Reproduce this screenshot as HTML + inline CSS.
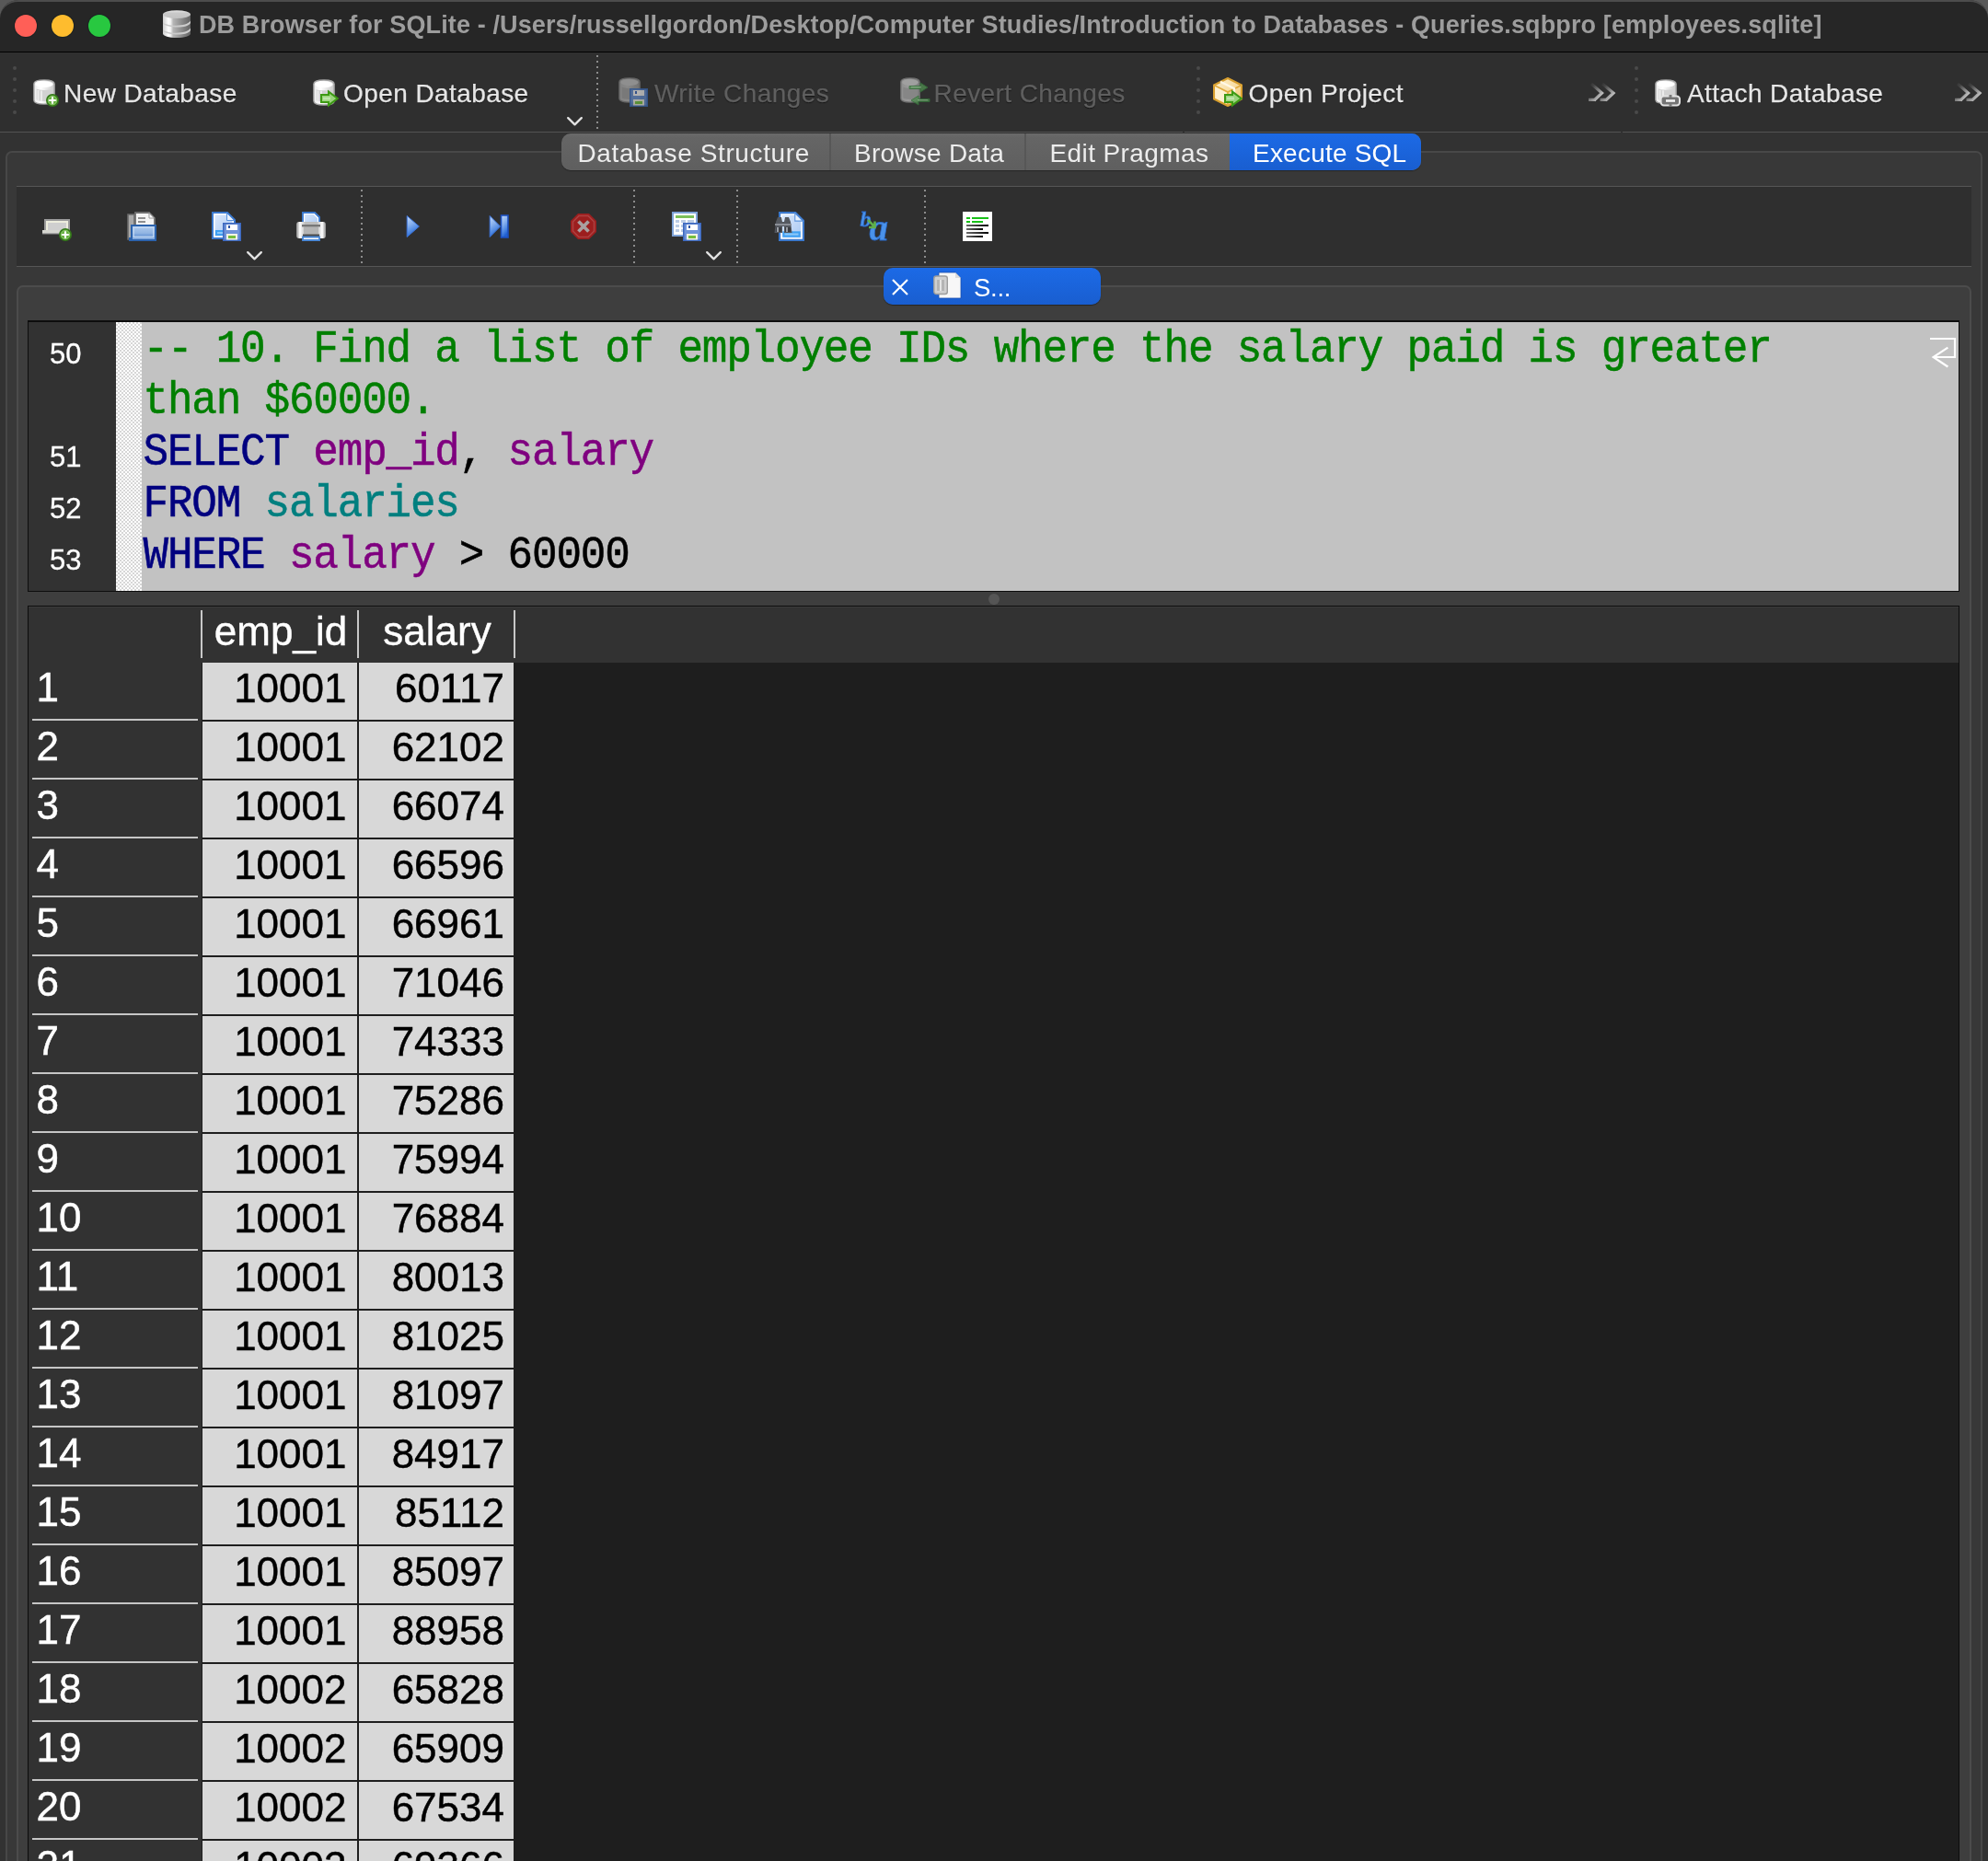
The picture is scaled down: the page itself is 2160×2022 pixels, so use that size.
<!DOCTYPE html>
<html>
<head>
<meta charset="utf-8">
<title>DB Browser for SQLite</title>
<style>
*{box-sizing:border-box;margin:0;padding:0}
html,body{width:2160px;height:2022px;overflow:hidden;background:#585858}
body{position:relative;font-family:"Liberation Sans",sans-serif;color:#e4e4e4}
#root{position:absolute;left:0;top:0;width:2160px;height:2022px;overflow:hidden;will-change:transform}
.abs{position:absolute}
svg{position:absolute;overflow:visible}
/* window + title bar */
#win{left:0;top:0;width:2160px;height:2100px;background:#323232;border-radius:20px 20px 0 0;overflow:hidden}
#titlebar{left:0;top:0;width:2160px;height:56px;background:#262626;border-top:2px solid #4c4c4c;border-radius:20px 20px 0 0}
#titleline{left:0;top:56px;width:2160px;height:1px;background:#000}
.tl{position:absolute;top:16px;width:24px;height:24px;border-radius:50%}
#title{left:216px;top:11px;font-weight:bold;font-size:27px;line-height:32px;letter-spacing:0.12px;color:#9d9d9d;white-space:nowrap}
/* main toolbar */
#toolbar{left:0;top:57px;width:2160px;height:86px;background:#2f2f2f}
.toolline{position:absolute;top:143px;height:1px;background:#525252}
.tbtxt{position:absolute;top:86px;font-size:28px;line-height:32px;letter-spacing:0.42px;color:#e6e6e6;white-space:nowrap;text-shadow:0 1px 1px rgba(0,0,0,.6);-webkit-text-stroke:0.25px currentColor}
.tbtxt.dis{color:#5f5f5f}
.vdots{position:absolute;width:2px;background-image:linear-gradient(#8c8c8c 2px,transparent 2px);background-size:2px 6px}
.hdot{position:absolute;width:4px;height:4px;border-radius:2px;background:#4a4a4a}
/* tabs */
#tabs{left:610px;top:145px;height:40px;width:934px;border-radius:10px;background:linear-gradient(#6a6a6a,#656565 12%,#5f5f5f);overflow:hidden;box-shadow:0 1px 1px rgba(0,0,0,.35)}
.tab{position:absolute;top:0;height:40px;font-size:28px;line-height:43px;letter-spacing:0.45px;color:#ececec;white-space:nowrap}
.tdiv{position:absolute;top:0;width:2px;height:40px;background:#575757}
/* panels */
#panel1{left:6px;top:164px;width:2148px;height:1900px;background:#383838;border:2px solid #484848;border-radius:7px}
#sqlbar{left:18px;top:202px;width:2124px;height:88px;background:#2f2f2f;border-top:1px solid #565656;border-bottom:1px solid #565656}
#panel2{left:18px;top:310px;width:2124px;height:1800px;background:#3e3e3e;border:2px solid #4c4c4c;border-radius:7px}
#sqltab{left:960px;top:291px;width:236px;height:40px;background:linear-gradient(#1c6ae6,#195ed0);border-radius:10px;box-shadow:0 1px 1px rgba(0,0,0,.4)}
#sqltabtxt{left:1058px;top:297px;font-size:27.5px;line-height:32px;color:#fff;letter-spacing:-0.3px}
/* editor */
#editor{left:30px;top:348px;width:2099px;height:295px;background:#c2c2c2;border:2px solid #0d0d0d;border-right-width:1px;border-bottom-width:1px;border-left-width:1px}
#gutter{left:31px;top:350px;width:95px;height:292px;background:#323232}
#fold{left:126px;top:350px;width:28px;height:292px;background-color:#fff;background-image:conic-gradient(#d6d6d6 25%,#fff 0 50%,#d6d6d6 0 75%,#fff 0);background-size:4px 4px}
.ln{position:absolute;left:31px;width:57.5px;text-align:right;font-size:31px;line-height:34px;color:#fff;-webkit-text-stroke:0.3px #fff}
.code{position:absolute;left:155.5px;font-family:"Liberation Mono",monospace;font-size:46px;line-height:56px;letter-spacing:-1.2px;white-space:pre;transform:scaleY(1.08);transform-origin:0 42px;-webkit-text-stroke:0.5px currentColor}
.cm{color:#007f00}.kw{color:#00007f}.id{color:#7f007f}.tb{color:#007f7f}.bk{color:#000}
/* splitter */
#splitdot{left:1074px;top:645px;width:12px;height:12px;border-radius:6px;background:#555}
/* results */
#results{left:30px;top:658px;width:2099px;height:1400px;background:#1e1e1e;border:1px solid #0c0c0c}
#rhead{left:31px;top:659px;width:2097px;height:61px;background:#323232;border-top:1px solid #3c3c3c}
#rowhdr{left:31px;top:720px;width:188px;height:1320px;background:#323232}
.hsep{position:absolute;top:663px;width:2px;height:52px;background:#c8c8c8}
.hd{position:absolute;top:660px;height:58px;font-size:44px;line-height:52px;color:#fff;text-align:center;white-space:nowrap;-webkit-text-stroke:0.4px #fff}
.rn{position:absolute;left:39.5px;font-size:44px;line-height:52px;color:#fff;-webkit-text-stroke:0.45px #fff}
.rl{position:absolute;left:35px;width:180px;height:2px;background:#c6c6c6}
.c1,.c2{position:absolute;height:62px;background:#d8d8d8;color:#000;font-size:44px;line-height:55px;text-align:right;white-space:nowrap;-webkit-text-stroke:0.45px #000}
.c1{left:220px;width:168px;padding-right:11.5px}
.c2{left:390px;width:168px;padding-right:10px}
</style>
</head>
<body>
<div id="root">
<svg width="0" height="0" style="left:0;top:0">
<defs>
  <linearGradient id="gCyl" x1="0" y1="0" x2="1" y2="0"><stop offset="0" stop-color="#ededed"/><stop offset=".35" stop-color="#ffffff"/><stop offset="1" stop-color="#c9c9c9"/></linearGradient>
  <linearGradient id="gCylD" x1="0" y1="0" x2="1" y2="0"><stop offset="0" stop-color="#8f8f8f"/><stop offset=".4" stop-color="#9a9a9a"/><stop offset="1" stop-color="#7c7c7c"/></linearGradient>
  <linearGradient id="gPage" x1="0" y1="0" x2="1" y2="1"><stop offset="0" stop-color="#dbe8fb"/><stop offset="1" stop-color="#a9c8f2"/></linearGradient>
  <linearGradient id="gFolder" x1="0" y1="0" x2="0" y2="1"><stop offset="0" stop-color="#b2cdee"/><stop offset=".55" stop-color="#8fb3e2"/><stop offset=".56" stop-color="#7ba4db"/><stop offset="1" stop-color="#86acdf"/></linearGradient>
  <linearGradient id="gPlay" x1="0" y1="0" x2=".35" y2="1"><stop offset="0" stop-color="#c4dafa"/><stop offset=".45" stop-color="#86b0ee"/><stop offset=".8" stop-color="#4682e0"/><stop offset="1" stop-color="#1f5fd0"/></linearGradient>
  <linearGradient id="gPrn" x1="0" y1="0" x2="1" y2="0"><stop offset="0" stop-color="#8a8a8a"/><stop offset=".12" stop-color="#ffffff"/><stop offset=".3" stop-color="#bdbdbd"/><stop offset=".7" stop-color="#bdbdbd"/><stop offset=".88" stop-color="#ffffff"/><stop offset="1" stop-color="#8a8a8a"/></linearGradient>
  <linearGradient id="gBox" x1="0" y1="0" x2="1" y2="1"><stop offset="0" stop-color="#fff3d6"/><stop offset="1" stop-color="#f0c870"/></linearGradient>
  <linearGradient id="gExt" x1="0" y1="0" x2="1" y2="1"><stop offset="0" stop-color="#d8d8d8" stop-opacity="0"/><stop offset=".25" stop-color="#d8d8d8" stop-opacity=".12"/><stop offset=".6" stop-color="#d8d8d8" stop-opacity=".55"/><stop offset="1" stop-color="#ececec" stop-opacity="1"/></linearGradient>
  <linearGradient id="gLine" x1="0" y1="0" x2="1" y2="0"><stop offset="0" stop-color="#6a6a6a"/><stop offset="1" stop-color="#000"/></linearGradient>
  <!-- toolbar extension >> 28x20 -->
</defs>
</svg>

<div id="win" class="abs"></div>
<!-- TITLE BAR -->
<div id="titlebar" class="abs"></div>
<div id="titleline" class="abs"></div>
<div class="tl" style="left:16px;background:#ff5f57;box-shadow:0 0 0 1px #1c2222"></div>
<div class="tl" style="left:56px;background:#febc2e;box-shadow:0 0 0 1px #1c2222"></div>
<div class="tl" style="left:96px;background:#28c840;box-shadow:0 0 0 1px #1c2222"></div>
<!-- app icon: stacked db -->
<svg style="left:177px;top:11px" width="30" height="30" viewBox="0 0 30 30">
  <defs><linearGradient id="gApp" x1="0" y1="0" x2="1" y2="0"><stop offset="0" stop-color="#d0d0d0"/><stop offset=".1" stop-color="#e6e6e6"/><stop offset=".2" stop-color="#ffffff"/><stop offset=".28" stop-color="#f2f2f2"/><stop offset=".37" stop-color="#b6b6b6"/><stop offset=".6" stop-color="#969696"/><stop offset="1" stop-color="#626262"/></linearGradient>
  <linearGradient id="gAppT" x1="0" y1="0" x2="0" y2="1"><stop offset="0" stop-color="#e8e8e8"/><stop offset=".35" stop-color="#c9c9c9"/><stop offset="1" stop-color="#c2c2c2"/></linearGradient></defs>
  <path d="M0,4.6 V25.4 C0,28 6.5,30 15,30 S30,28 30,25.4 V4.6Z" fill="url(#gApp)"/>
  <path d="M0,13.2 C4,17.8 26,18.6 30,11.6 V14 C27,20.6 4,19.2 0,14.4Z" fill="#cbcbcb"/>
  <path d="M0,21.2 C4,25.8 26,26.6 30,19.6 V22 C27,28.6 4,27.2 0,22.4Z" fill="#cbcbcb"/>
  <ellipse cx="15" cy="4.6" rx="15" ry="4.4" fill="url(#gAppT)"/>
</svg>
<div id="title" class="abs">DB Browser for SQLite - /Users/russellgordon/Desktop/Computer Studies/Introduction to Databases - Queries.sqbpro [employees.sqlite]</div>

<!-- MAIN TOOLBAR -->
<div id="toolbar" class="abs"></div>
<div class="toolline" style="left:0;width:1285px"></div>
<div class="toolline" style="left:1287px;width:474px"></div>
<div class="toolline" style="left:1763px;width:397px"></div>
<!-- handles -->
<div class="hdot" style="left:14px;top:72px"></div><div class="hdot" style="left:14px;top:84px"></div><div class="hdot" style="left:14px;top:96px"></div><div class="hdot" style="left:14px;top:108px"></div><div class="hdot" style="left:14px;top:120px"></div>
<div class="hdot" style="left:1300px;top:72px"></div><div class="hdot" style="left:1300px;top:84px"></div><div class="hdot" style="left:1300px;top:96px"></div><div class="hdot" style="left:1300px;top:108px"></div><div class="hdot" style="left:1300px;top:120px"></div>
<div class="hdot" style="left:1776px;top:72px"></div><div class="hdot" style="left:1776px;top:84px"></div><div class="hdot" style="left:1776px;top:96px"></div><div class="hdot" style="left:1776px;top:108px"></div><div class="hdot" style="left:1776px;top:120px"></div>
<div class="vdots" style="left:648px;top:60px;height:80px"></div>

<!-- New Database -->
<svg style="left:36px;top:86px" width="24" height="28" viewBox="0 0 24 28"><path d="M.9,5 C.9,2.2 5.5,.9 12,.9 S23.1,2.2 23.1,5 V23 C23.1,25.8 18.5,27.1 12,27.1 S.9,25.8 .9,23Z" fill="url(#gCyl)" stroke="#a4a4a4" stroke-width="1.4"/>
    <path d="M3.6,10.5 C6,12.4 18,12.4 20.4,10.5 V22.3 C18,24.6 6,24.6 3.6,22.3Z" fill="#d2d2d2"/>
    <path d="M5.5,12 V23.3 M9,12.4 V24" stroke="#ececec" stroke-width="2"/>
    <ellipse cx="12" cy="5.6" rx="9.6" ry="3.4" fill="#fff"/></svg>
<svg style="left:50px;top:102px" width="14" height="14" viewBox="0 0 14 14"><circle cx="7" cy="7" r="6.2" fill="#62ad3b" stroke="#34781a" stroke-width="1.6"/>
    <circle cx="7" cy="7" r="4.6" fill="none" stroke="#8cc96b" stroke-width="1"/>
    <path d="M7,3.2 V10.8 M3.2,7 H10.8" stroke="#fff" stroke-width="2.2"/></svg>
<div class="tbtxt" style="left:69px">New Database</div>
<!-- Open Database -->
<svg style="left:340px;top:86px" width="24" height="29" viewBox="0 0 24 28" preserveAspectRatio="none"><path d="M.9,5 C.9,2.2 5.5,.9 12,.9 S23.1,2.2 23.1,5 V23 C23.1,25.8 18.5,27.1 12,27.1 S.9,25.8 .9,23Z" fill="url(#gCyl)" stroke="#a4a4a4" stroke-width="1.4"/>
    <path d="M3.6,10.5 C6,12.4 18,12.4 20.4,10.5 V22.3 C18,24.6 6,24.6 3.6,22.3Z" fill="#d2d2d2"/>
    <path d="M5.5,12 V23.3 M9,12.4 V24" stroke="#ececec" stroke-width="2"/>
    <ellipse cx="12" cy="5.6" rx="9.6" ry="3.4" fill="#fff"/></svg>
<svg style="left:348px;top:98px" width="20" height="18" viewBox="0 0 20 18"><path d="M1,5 H9 V1.6 L18.8,9 L9,16.4 V13 H1Z" fill="#9bd47e" stroke="#3d9a14" stroke-width="2" stroke-linejoin="miter"/>
    <path d="M3,7.6 H11 V10.4 H3Z" fill="#bfe5ab"/></svg>
<div class="tbtxt" style="left:373px">Open Database</div>
<svg style="left:615.5px;top:127px" width="17" height="10" viewBox="0 0 17 10"><path d="M1.2,1.2 L8.5,8.3 L15.8,1.2" fill="none" stroke="#e2e2e2" stroke-width="2.4" stroke-linecap="round" stroke-linejoin="round"/></svg>
<!-- Write Changes (disabled) -->
<svg style="left:672px;top:84px;opacity:.85" width="24" height="28" viewBox="0 0 24 28"><path d="M.9,5 C.9,2.2 5.5,.9 12,.9 S23.1,2.2 23.1,5 V23 C23.1,25.8 18.5,27.1 12,27.1 S.9,25.8 .9,23Z" fill="url(#gCylD)" stroke="#6d6d6d" stroke-width="1.4"/>
    <path d="M3.6,10.5 C6,12.4 18,12.4 20.4,10.5 V22.3 C18,24.6 6,24.6 3.6,22.3Z" fill="#868686"/>
    <ellipse cx="12" cy="5.6" rx="9.6" ry="3.4" fill="#a0a0a0"/></svg>
<svg style="left:684px;top:96px;opacity:.9" width="20" height="20" viewBox="0 0 20 20"><rect x=".75" y=".75" width="18.5" height="18.5" fill="#52709f" stroke="#34578f" stroke-width="1.5"/>
    <rect x="4" y="2" width="12" height="6" fill="#b9b9b9"/>
    <rect x="6" y="3" width="2" height="3" fill="#2c4d8c"/>
    <rect x="4" y="12" width="12" height="6.5" fill="#b4b4aa"/>
    <rect x="6" y="14" width="8" height="3" fill="#5f9a38"/></svg>
<div class="tbtxt dis" style="left:711px">Write Changes</div>
<!-- Revert Changes (disabled) -->
<svg style="left:978px;top:84px" width="22" height="28" viewBox="0 0 24 28" preserveAspectRatio="none"><path d="M.9,5 C.9,2.2 5.5,.9 12,.9 S23.1,2.2 23.1,5 V23 C23.1,25.8 18.5,27.1 12,27.1 S.9,25.8 .9,23Z" fill="url(#gCylD)" stroke="#6d6d6d" stroke-width="1.4"/>
    <path d="M3.6,10.5 C6,12.4 18,12.4 20.4,10.5 V22.3 C18,24.6 6,24.6 3.6,22.3Z" fill="#868686"/>
    <ellipse cx="12" cy="5.6" rx="9.6" ry="3.4" fill="#a0a0a0"/></svg>
<svg style="left:988px;top:88px;opacity:.8" width="22" height="28" viewBox="0 0 22 28">
  <path d="M0,5.5 H12 V2 L20,7 L12,12 V8.5 H0Z" fill="#4f8a4f" stroke="#35703a" stroke-width="1"/>
  <path d="M22,19.5 H10 V16 L2,21 L10,26 V22.5 H22Z" fill="#4f8a4f" stroke="#35703a" stroke-width="1"/>
  <path d="M2,6.6 H13 M20,20.6 H9" stroke="#7fb07f" stroke-width="1.4"/>
</svg>
<div class="tbtxt dis" style="left:1014.5px">Revert Changes</div>
<!-- Open Project -->
<svg style="left:1318px;top:84px" width="32" height="32" viewBox="0 0 32 32">
  <path d="M16,1 L31,8.5 V23.5 L16,31 L1,23.5 V8.5Z" fill="url(#gBox)" stroke="#d89f2e" stroke-width="2" stroke-linejoin="round"/>
  <path d="M1,8.5 L16,16 L31,8.5 M16,16 V31" fill="none" stroke="#e0aa3e" stroke-width="1.6"/>
  <path d="M8,4.8 L23,12.3 V17" fill="none" stroke="#fff8e6" stroke-width="2.4"/>
  <path d="M2.5,10.5 L14.8,16.8 V28.8 L2.5,22.6Z" fill="#fdf0d0"/>
</svg>
<svg style="left:1330px;top:98px" width="20" height="18" viewBox="0 0 20 18"><path d="M1,5 H9 V1.6 L18.8,9 L9,16.4 V13 H1Z" fill="#9bd47e" stroke="#3d9a14" stroke-width="2" stroke-linejoin="miter"/>
    <path d="M3,7.6 H11 V10.4 H3Z" fill="#bfe5ab"/></svg>
<div class="tbtxt" style="left:1356.5px">Open Project</div>
<svg style="left:1726px;top:90px" width="28" height="20" viewBox="0 0 28 20"><path d="M3,1 L14.5,11 L6,19 M0,18.4 H8" fill="none" stroke="url(#gExt)" stroke-width="3.2"/>
    <path d="M15,1 L27,11 L18.5,19 M12.5,18.4 H20" fill="none" stroke="url(#gExt)" stroke-width="3.2"/></svg>
<!-- Attach Database -->
<svg style="left:1798px;top:86px" width="24" height="27.5" viewBox="0 0 24 28" preserveAspectRatio="none"><path d="M.9,5 C.9,2.2 5.5,.9 12,.9 S23.1,2.2 23.1,5 V23 C23.1,25.8 18.5,27.1 12,27.1 S.9,25.8 .9,23Z" fill="url(#gCyl)" stroke="#a4a4a4" stroke-width="1.4"/>
    <path d="M3.6,10.5 C6,12.4 18,12.4 20.4,10.5 V22.3 C18,24.6 6,24.6 3.6,22.3Z" fill="#d2d2d2"/>
    <path d="M5.5,12 V23.3 M9,12.4 V24" stroke="#ececec" stroke-width="2"/>
    <ellipse cx="12" cy="5.6" rx="9.6" ry="3.4" fill="#fff"/></svg>
<svg style="left:1803px;top:103px" width="24" height="13" viewBox="0 0 24 13">
  <rect x="1.6" y="1.4" width="20.4" height="10" rx="3.2" fill="#747474" stroke="#e2e2e2" stroke-width="2"/>
  <rect x="7" y="5.2" width="10" height="2.6" fill="#f2f2f2"/>
  <path d="M12,0 V3 M12,10 V13" stroke="#7a7a7a" stroke-width="3"/>
</svg>
<div class="tbtxt" style="left:1833px">Attach Database</div>
<svg style="left:2124px;top:90px" width="28" height="20" viewBox="0 0 28 20"><path d="M3,1 L14.5,11 L6,19 M0,18.4 H8" fill="none" stroke="url(#gExt)" stroke-width="3.2"/>
    <path d="M15,1 L27,11 L18.5,19 M12.5,18.4 H20" fill="none" stroke="url(#gExt)" stroke-width="3.2"/></svg>

<!-- PANELS -->
<div id="panel1" class="abs"></div>
<div id="tabs" class="abs">
  <div class="tab" style="left:17.5px;letter-spacing:0.62px">Database Structure</div>
  <div class="tdiv" style="left:291px"></div>
  <div class="tab" style="left:318px;letter-spacing:0.25px">Browse Data</div>
  <div class="tdiv" style="left:503px"></div>
  <div class="tab" style="left:530.5px;letter-spacing:0.4px">Edit Pragmas</div>
  <div class="tab" style="left:726px;width:208px;background:linear-gradient(#1c6ae6,#195ed0);color:#fff;letter-spacing:0.22px"><span style="position:absolute;left:25px">Execute SQL</span></div>
</div>
<div id="sqlbar" class="abs"></div>
<div id="panel2" class="abs"></div>

<!-- SQL TOOLBAR ICONS -->
<div class="vdots" style="left:392px;top:206px;height:80px"></div>
<div class="vdots" style="left:688px;top:206px;height:80px"></div>
<div class="vdots" style="left:800px;top:206px;height:80px"></div>
<div class="vdots" style="left:1004px;top:206px;height:80px"></div>
<!-- 1 new tab -->
<svg style="left:46px;top:238px" width="32" height="24" viewBox="0 0 32 24">
  <path d="M3,1 H29 V13 H3Z" fill="#cfcfcf" stroke="#9c9c9c" stroke-width="2"/>
  <path d="M5,3 H27 V13 H5Z" fill="none" stroke="#ededde" stroke-width="2"/>
  <rect x="0" y="12" width="30" height="4" fill="#d6d6d0"/>
  <rect x="0" y="15" width="30" height="1.4" fill="#a8a8a8"/>
</svg>
<svg style="left:64px;top:248px" width="14" height="14" viewBox="0 0 14 14"><circle cx="7" cy="7" r="6.2" fill="#62ad3b" stroke="#34781a" stroke-width="1.6"/>
    <circle cx="7" cy="7" r="4.6" fill="none" stroke="#8cc96b" stroke-width="1"/>
    <path d="M7,3.2 V10.8 M3.2,7 H10.8" stroke="#fff" stroke-width="2.2"/></svg>
<!-- 2 open -->
<svg style="left:138px;top:230px" width="32" height="32" viewBox="0 0 32 32">
  <path d="M1,3 H8 V30 H1Z" fill="#a9a9a9" stroke="#6a6a6a" stroke-width="1.6"/>
  <path d="M9,1 H24 L30,7 V20 H9Z" fill="#f4f4f4" stroke="#6f6f6f" stroke-width="1.8"/>
  <path d="M24,1.5 V7 H29.5Z" fill="#fff" stroke="#9a9a9a" stroke-width="1"/>
  <rect x="12" y="6" width="8" height="2" fill="#8f8f8f"/><rect x="12" y="10" width="8" height="2" fill="#8f8f8f"/>
  <path d="M5,15 H31 V31 H3 V29 H5Z" fill="url(#gFolder)" stroke="#2c63ad" stroke-width="2"/>
  <path d="M7.2,17.2 H28.8 V27.5 H7.2Z" fill="none" stroke="#c5daf3" stroke-width="1.2"/>
</svg>
<!-- 3 save -->
<svg style="left:230px;top:230px" width="26" height="30" viewBox="0 0 26 30"><path d="M1,1 H17 L25,9 V29 H1Z" fill="#fff" stroke="#3b78cc" stroke-width="2" stroke-linejoin="miter"/>
    <path d="M3.5,3.5 H16 L22.5,10 V26.5 H3.5Z" fill="url(#gPage)"/>
    <path d="M16.5,1.5 V9.5 H24.5Z" fill="#eaf2fd" stroke="#5b93dd" stroke-width="1"/>
    <rect x="4" y="20" width="18" height="6" fill="#3fa0f2"/>
    <rect x="6" y="22" width="14" height="2" fill="#8cc8f8"/></svg>
<svg style="left:242px;top:242px" width="20" height="20" viewBox="0 0 20 20"><rect x=".75" y=".75" width="18.5" height="18.5" fill="#6f93d9" stroke="#3c68bf" stroke-width="1.5"/>
    <rect x="4" y="2" width="12" height="6" fill="#fff"/>
    <rect x="6" y="3" width="2" height="3" fill="#2f56a8"/>
    <rect x="4" y="12" width="12" height="6.5" fill="#f3f3e4"/>
    <rect x="6" y="14" width="8" height="3" fill="#76bf3f"/></svg>
<svg style="left:267.5px;top:273px" width="17" height="10" viewBox="0 0 17 10"><path d="M1.2,1.2 L8.5,8.3 L15.8,1.2" fill="none" stroke="#e2e2e2" stroke-width="2.4" stroke-linecap="round" stroke-linejoin="round"/></svg>
<!-- 4 print -->
<svg style="left:322px;top:230px" width="32" height="32" viewBox="0 0 32 32">
  <path d="M7,1 H20 L25,6 V15 H7Z" fill="url(#gPage)" stroke="#3b78cc" stroke-width="2"/>
  <path d="M8.5,2.5 H19 L23.5,7 V14 H8.5Z" fill="none" stroke="#fff" stroke-width="1.2"/>
  <rect x="0" y="11" width="32" height="18" rx="3" fill="url(#gPrn)"/>
  <rect x="6" y="14" width="20" height="2.4" fill="#777"/>
  <rect x="8" y="17" width="16" height="7" fill="#b4b4b4"/>
  <rect x="7" y="24.5" width="18" height="2.6" fill="#4a4a4a"/>
  <path d="M7,27.5 H25 V31 H7Z" fill="#fff" stroke="#4a88d6" stroke-width="1.8"/>
</svg>
<!-- 5 play -->
<svg style="left:441px;top:233px" width="16" height="26" viewBox="0 0 16 26">
  <path d="M1.2,1.5 L14.4,13 L1.2,24.5Z" fill="url(#gPlay)" stroke="#3a72d8" stroke-width="1" stroke-linejoin="miter"/>
</svg>
<!-- 6 step -->
<svg style="left:531px;top:233px" width="22" height="26" viewBox="0 0 22 26">
  <path d="M1.2,1.5 L12.6,13 L1.2,24.5Z" fill="url(#gPlay)" stroke="#3a72d8" stroke-width="1"/>
  <rect x="13.5" y="1" width="7.5" height="24" fill="url(#gPlay)" stroke="#1d50c0" stroke-width="1.6"/>
</svg>
<!-- 7 stop -->
<svg style="left:620px;top:232px" width="28" height="28" viewBox="0 0 28 28">
  <path d="M8,0 H20 L28,8 V20 L20,28 H8 L0,20 V8Z" fill="#9c1e1e"/>
  <path d="M9,2.5 H19 L25.5,9 V19 L19,25.5 H9 L2.5,19 V9Z" fill="none" stroke="#ad4040" stroke-width="1.6"/>
  <path d="M8.5,8.5 L19.5,19.5 M19.5,8.5 L8.5,19.5" stroke="#a9a0a0" stroke-width="3.8"/>
</svg>
<!-- 8 save results -->
<svg style="left:730px;top:230px" width="32" height="32" viewBox="0 0 32 32">
  <rect x="1" y="1" width="26" height="25" fill="#fff" stroke="#7fa3d8" stroke-width="2"/>
  <rect x="4" y="4" width="20" height="3" fill="#7cc05a"/>
  <g fill="#bccde6"><rect x="4" y="9" width="4" height="3"/><rect x="10" y="9" width="5" height="3"/><rect x="17" y="9" width="7" height="3"/><rect x="4" y="14" width="4" height="3"/><rect x="10" y="14" width="5" height="3"/><rect x="4" y="19" width="4" height="3"/><rect x="10" y="19" width="5" height="3"/></g>
</svg>
<svg style="left:742px;top:242px" width="20" height="20" viewBox="0 0 20 20"><rect x=".75" y=".75" width="18.5" height="18.5" fill="#6f93d9" stroke="#3c68bf" stroke-width="1.5"/>
    <rect x="4" y="2" width="12" height="6" fill="#fff"/>
    <rect x="6" y="3" width="2" height="3" fill="#2f56a8"/>
    <rect x="4" y="12" width="12" height="6.5" fill="#f3f3e4"/>
    <rect x="6" y="14" width="8" height="3" fill="#76bf3f"/></svg>
<svg style="left:767px;top:273px" width="17" height="10" viewBox="0 0 17 10"><path d="M1.2,1.2 L8.5,8.3 L15.8,1.2" fill="none" stroke="#e2e2e2" stroke-width="2.4" stroke-linecap="round" stroke-linejoin="round"/></svg>
<!-- 9 find -->
<svg style="left:846px;top:230px" width="28" height="32" viewBox="0 0 26 30" preserveAspectRatio="none"><path d="M1,1 H17 L25,9 V29 H1Z" fill="#fff" stroke="#3b78cc" stroke-width="2" stroke-linejoin="miter"/>
    <path d="M3.5,3.5 H16 L22.5,10 V26.5 H3.5Z" fill="url(#gPage)"/>
    <path d="M16.5,1.5 V9.5 H24.5Z" fill="#eaf2fd" stroke="#5b93dd" stroke-width="1"/>
    <rect x="4" y="20" width="18" height="6" fill="#3fa0f2"/>
    <rect x="6" y="22" width="14" height="2" fill="#8cc8f8"/></svg>
<svg style="left:841px;top:236px" width="20" height="18" viewBox="0 0 20 18">
  <path d="M2,5 L4,0 H8 L9,5 H11 L12,0 H16 L18,5 L19.5,17 H11 V10 H9 V17 H0.5Z" fill="#54585f"/>
  <rect x="1" y="7" width="18" height="2" fill="#8a8e96"/>
  <rect x="2" y="11" width="6" height="5" fill="#3a3d43"/><rect x="12" y="11" width="6" height="5" fill="#3a3d43"/>
  <rect x="3" y="11" width="2" height="5" fill="#9a9ea6"/><rect x="13" y="11" width="2" height="5" fill="#9a9ea6"/>
</svg>
<!-- 10 replace -->
<svg style="left:932px;top:229px" width="36" height="34" viewBox="0 0 36 34">
  <text x="2.5" y="17" font-family="Liberation Serif,serif" font-style="italic" font-weight="bold" font-size="24" fill="#4a92ea" stroke="#2a68c6" stroke-width=".8">b</text>
  <text x="12.5" y="32.4" font-family="Liberation Serif,serif" font-style="italic" font-weight="bold" font-size="41" fill="#4a92ea" stroke="#2a68c6" stroke-width=".8">a</text>
  <path d="M11,10 L18.5,17.5 M18.5,11.5 V18 H12" fill="none" stroke="#5fb04a" stroke-width="2.6"/>
</svg>
<!-- 11 comment block -->
<svg style="left:1046px;top:230px" width="32" height="32" viewBox="0 0 32 32" shape-rendering="crispEdges">
  <rect width="32" height="32" fill="#fff"/>
  <rect x="4" y="6" width="4" height="2" fill="#18c018"/><rect x="10" y="6" width="18" height="2" fill="#18c018"/>
  <rect x="4" y="10" width="4" height="2" fill="#18c018"/><rect x="10" y="10" width="12" height="2" fill="#18c018"/>
  <rect x="4" y="14" width="24" height="2" fill="url(#gLine)"/>
  <rect x="4" y="18" width="18" height="2" fill="url(#gLine)"/>
  <rect x="4" y="22" width="24" height="2" fill="url(#gLine)"/>
  <rect x="4" y="26" width="18" height="2" fill="url(#gLine)"/>
</svg>
<!-- SQL tab -->
<div id="sqltab" class="abs"></div>
<svg style="left:969px;top:303px" width="18" height="18" viewBox="0 0 18 18"><path d="M1,1 L17,17 M17,1 L1,17" stroke="#fff" stroke-width="2.2"/></svg>
<svg style="left:1014px;top:295px" width="31" height="30" viewBox="0 0 31 30">
  <path d="M6,1 H24 L30,7 V29 H6Z" fill="#f7f7f7" stroke="#1a4fae" stroke-width=".8"/>
  <path d="M24,1 V7 H30Z" fill="#dcdcdc"/>
  <rect x=".8" y="5" width="14.5" height="19.5" rx="2.5" fill="#cfcfcf" stroke="#9d9d9d" stroke-width="1.4"/>
  <rect x="4" y="9" width="8" height="12" fill="#b4b4b4"/><rect x="7" y="9" width="2" height="12" fill="#e4e4e4"/>
</svg>
<div id="sqltabtxt" class="abs">S...</div>

<!-- EDITOR -->
<div id="editor" class="abs"></div>
<div id="gutter" class="abs"></div>
<div id="fold" class="abs"></div>
<div class="ln" style="top:368px">50</div>
<div class="ln" style="top:480px">51</div>
<div class="ln" style="top:536px">52</div>
<div class="ln" style="top:592px">53</div>
<div class="code cm" style="top:353px">-- 10. Find a list of employee IDs where the salary paid is greater</div>
<div class="code cm" style="top:409px">than $60000.</div>
<div class="code" style="top:465px"><span class="kw">SELECT</span> <span class="id">emp_id</span><span class="bk">,</span> <span class="id">salary</span></div>
<div class="code" style="top:521px"><span class="kw">FROM</span> <span class="tb">salaries</span></div>
<div class="code" style="top:577px"><span class="kw">WHERE</span> <span class="id">salary</span> <span class="bk">&gt; 60000</span></div>
<svg style="left:2096px;top:366px" width="30" height="34" viewBox="0 0 30 34"><path d="M1,2 H28 V22 H4 M20.4,11.6 L4.6,22 L20.4,32.5" fill="none" stroke="#fff" stroke-width="2.2"/></svg>
<div id="splitdot" class="abs"></div>

<!-- RESULTS -->
<div id="results" class="abs"></div>
<div id="rhead" class="abs"></div>
<div id="rowhdr" class="abs"></div>
<div class="hsep" style="left:218px"></div>
<div class="hsep" style="left:388px"></div>
<div class="hsep" style="left:558px"></div>
<div class="hd" style="left:221px;width:168px">emp_id</div>
<div class="hd" style="left:391px;width:168px">salary</div>

<div id="rows">
<div class="rn" style="top:721px">1</div><div class="rl" style="top:781px"></div><div class="c1" style="top:720px">10001</div><div class="c2" style="top:720px">60117</div>
<div class="rn" style="top:785px">2</div><div class="rl" style="top:845px"></div><div class="c1" style="top:784px">10001</div><div class="c2" style="top:784px">62102</div>
<div class="rn" style="top:849px">3</div><div class="rl" style="top:909px"></div><div class="c1" style="top:848px">10001</div><div class="c2" style="top:848px">66074</div>
<div class="rn" style="top:913px">4</div><div class="rl" style="top:973px"></div><div class="c1" style="top:912px">10001</div><div class="c2" style="top:912px">66596</div>
<div class="rn" style="top:977px">5</div><div class="rl" style="top:1037px"></div><div class="c1" style="top:976px">10001</div><div class="c2" style="top:976px">66961</div>
<div class="rn" style="top:1041px">6</div><div class="rl" style="top:1101px"></div><div class="c1" style="top:1040px">10001</div><div class="c2" style="top:1040px">71046</div>
<div class="rn" style="top:1105px">7</div><div class="rl" style="top:1165px"></div><div class="c1" style="top:1104px">10001</div><div class="c2" style="top:1104px">74333</div>
<div class="rn" style="top:1169px">8</div><div class="rl" style="top:1229px"></div><div class="c1" style="top:1168px">10001</div><div class="c2" style="top:1168px">75286</div>
<div class="rn" style="top:1233px">9</div><div class="rl" style="top:1293px"></div><div class="c1" style="top:1232px">10001</div><div class="c2" style="top:1232px">75994</div>
<div class="rn" style="top:1297px">10</div><div class="rl" style="top:1357px"></div><div class="c1" style="top:1296px">10001</div><div class="c2" style="top:1296px">76884</div>
<div class="rn" style="top:1361px">11</div><div class="rl" style="top:1421px"></div><div class="c1" style="top:1360px">10001</div><div class="c2" style="top:1360px">80013</div>
<div class="rn" style="top:1425px">12</div><div class="rl" style="top:1485px"></div><div class="c1" style="top:1424px">10001</div><div class="c2" style="top:1424px">81025</div>
<div class="rn" style="top:1489px">13</div><div class="rl" style="top:1549px"></div><div class="c1" style="top:1488px">10001</div><div class="c2" style="top:1488px">81097</div>
<div class="rn" style="top:1553px">14</div><div class="rl" style="top:1613px"></div><div class="c1" style="top:1552px">10001</div><div class="c2" style="top:1552px">84917</div>
<div class="rn" style="top:1617px">15</div><div class="rl" style="top:1677px"></div><div class="c1" style="top:1616px">10001</div><div class="c2" style="top:1616px">85112</div>
<div class="rn" style="top:1681px">16</div><div class="rl" style="top:1741px"></div><div class="c1" style="top:1680px">10001</div><div class="c2" style="top:1680px">85097</div>
<div class="rn" style="top:1745px">17</div><div class="rl" style="top:1805px"></div><div class="c1" style="top:1744px">10001</div><div class="c2" style="top:1744px">88958</div>
<div class="rn" style="top:1809px">18</div><div class="rl" style="top:1869px"></div><div class="c1" style="top:1808px">10002</div><div class="c2" style="top:1808px">65828</div>
<div class="rn" style="top:1873px">19</div><div class="rl" style="top:1933px"></div><div class="c1" style="top:1872px">10002</div><div class="c2" style="top:1872px">65909</div>
<div class="rn" style="top:1937px">20</div><div class="rl" style="top:1997px"></div><div class="c1" style="top:1936px">10002</div><div class="c2" style="top:1936px">67534</div>
<div class="rn" style="top:2001px">21</div><div class="rl" style="top:2061px"></div><div class="c1" style="top:2000px">10002</div><div class="c2" style="top:2000px">69366</div>
</div>
</div>
</body>
</html>
